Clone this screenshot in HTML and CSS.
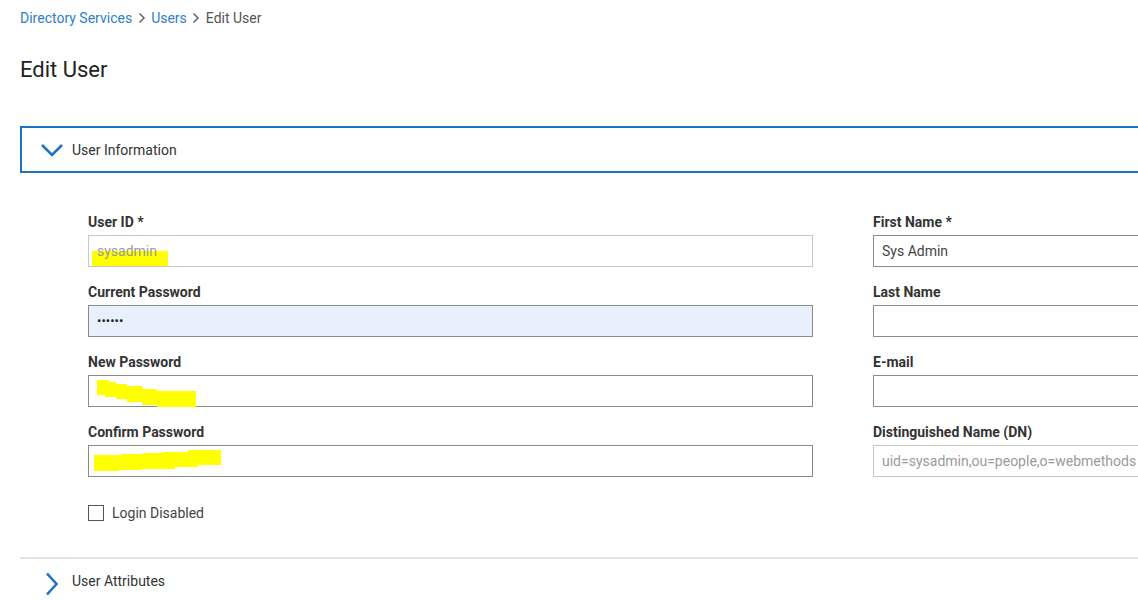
FILE: index.html
```html
<!DOCTYPE html>
<html>
<head>
<meta charset="utf-8">
<link rel="stylesheet" href="styles.css">
</head>
<body>
<div class="page">
  <nav class="crumbs">
    <a class="crumb-link">Directory Services</a>
    <svg class="crumb-sep" width="8" height="12" viewBox="0 0 8 12"><path d="M1.5 1.5 L6 6 L1.5 10.5" fill="none" stroke="#666" stroke-width="1.5"/></svg>
    <a class="crumb-link">Users</a>
    <svg class="crumb-sep" width="8" height="12" viewBox="0 0 8 12"><path d="M1.5 1.5 L6 6 L1.5 10.5" fill="none" stroke="#666" stroke-width="1.5"/></svg>
    <span class="crumb-current">Edit User</span>
  </nav>
  <h1 class="title">Edit User</h1>

  <div class="section-head open">
    <svg class="chev" width="24" height="16" viewBox="0 0 24 16"><path d="M2 3 L12 13 L22 3" fill="none" stroke="#1f73bd" stroke-width="2.6"/></svg>
    <span class="section-title">User Information</span>
  </div>

  <div class="form">
    <div class="col">
      <div class="field">
        <label class="label">User ID *</label>
        <div class="input disabled"><span class="mark mark-id"></span><span class="val">sysadmin</span></div>
      </div>
      <div class="field">
        <label class="label">Current Password</label>
        <div class="input autofill">••••••</div>
      </div>
      <div class="field">
        <label class="label">New Password</label>
        <div class="input">
          <svg class="mark-svg" width="102" height="30" viewBox="0 0 102 30"><polygon points="1,3 13,3 13,5 20,5 20,7 31,7 31,9 46,9 46,12 61,12 61,14 100,14 100,30 61,30 61,28 46,28 46,25 31,25 31,22 20,22 20,20 9,20 9,18 1,18" fill="#ffff00"/></svg>
        </div>
      </div>
      <div class="field">
        <label class="label">Confirm Password</label>
        <div class="input">
          <svg class="mark-svg2" width="130" height="24" viewBox="0 0 130 24"><polygon points="1,5 28,5 28,4 50,4 50,3 70,3 70,2 95,2 95,0 128,0 128,15 105,15 105,17 82,17 82,19 48,19 48,20 26,20 26,21 1,21" fill="#ffff00"/></svg>
        </div>
      </div>
      <label class="check">
        <span class="box"></span>
        <span class="check-label">Login Disabled</span>
      </label>
    </div>
    <div class="col">
      <div class="field">
        <label class="label">First Name *</label>
        <div class="input">Sys Admin</div>
      </div>
      <div class="field">
        <label class="label">Last Name</label>
        <div class="input"></div>
      </div>
      <div class="field">
        <label class="label">E-mail</label>
        <div class="input"></div>
      </div>
      <div class="field">
        <label class="label">Distinguished Name (DN)</label>
        <div class="input disabled">uid=sysadmin,ou=people,o=webmethods</div>
      </div>
    </div>
  </div>

  <div class="section-head closed">
    <svg class="chev-r" width="16" height="24" viewBox="0 0 16 24"><path d="M3 1.5 L12.5 12 L3 22.5" fill="none" stroke="#1f73bd" stroke-width="2.6"/></svg>
    <span class="section-title">User Attributes</span>
  </div>
</div>
</body>
</html>
```

FILE: styles.css
```css
html, body {
  margin: 0;
  padding: 0;
  overflow: hidden;
  background: #fff;
}
body {
  font-family: Roboto, "Liberation Sans", sans-serif;
  color: #333;
  width: 1138px;
  height: 600px;
}
.page {
  width: 1700px;
  padding-left: 20px;
}
.crumbs {
  display: flex;
  align-items: center;
  gap: 5px;
  height: 18px;
  padding-top: 9px;
  font-size: 14px;
}
.crumb-link { color: #2f7ec7; }
.crumb-current { color: #555; }
.crumb-sep { margin: 0 0.5px; }
.title {
  margin: 0;
  padding-top: 31px;
  font-size: 22px;
  font-weight: 400;
  color: #222;
  line-height: 24px;
  height: 24px;
}
.section-head {
  display: flex;
  align-items: center;
}
.section-head.open {
  margin-top: 44px;
  height: 43px;
  border: 2px solid #1f73bd;
  border-right: none;
}
.chev { margin-left: 18px; margin-right: 8px; margin-top: 1px; }
.section-title { font-size: 14px; color: #333; }
.form {
  display: flex;
  gap: 60px;
  padding-left: 68px;
  padding-top: 41px;
}
.col {
  width: 725px;
  display: flex;
  flex-direction: column;
  gap: 17px;
}
.field {
  display: flex;
  flex-direction: column;
  gap: 4px;
}
.label {
  font-size: 14px;
  font-weight: 700;
  color: #333;
  line-height: 17px;
  height: 17px;
}
.input {
  position: relative;
  box-sizing: border-box;
  height: 32px;
  border: 1px solid #8a8a8a;
  background: #fff;
  font-size: 14px;
  line-height: 30px;
  padding-left: 8px;
  color: #444;
}
.input.disabled {
  border-color: #c8c8c8;
  color: #9a9a9a;
}
.input.autofill {
  background: #e8f0fe;
  font-size: 13px;
  color: #222;
}
.val {
  position: relative;
}
.mark {
  position: absolute;
  background: #ffff00;
}
.mark-id {
  left: 3px;
  top: 15px;
  width: 76px;
  height: 15px;
}
.mark-svg {
  position: absolute;
  left: 7px;
  top: 1px;
}
.mark-svg2 {
  position: absolute;
  left: 4px;
  top: 4px;
}
.check {
  display: flex;
  align-items: center;
  gap: 8px;
  margin-top: 10px;
  height: 18px;
}
.box {
  box-sizing: border-box;
  width: 16px;
  height: 16px;
  border: 1px solid #555;
  background: #fff;
}
.check-label {
  font-size: 14px;
  color: #444;
}
.section-head.closed {
  margin-top: 35px;
  border-top: 2px solid #e2e2e2;
  height: 44px;
}
.chev-r { margin-left: 24px; margin-right: 12px; margin-top: 5px; }
.section-head.closed .section-title { margin-top: -1px; }
```
